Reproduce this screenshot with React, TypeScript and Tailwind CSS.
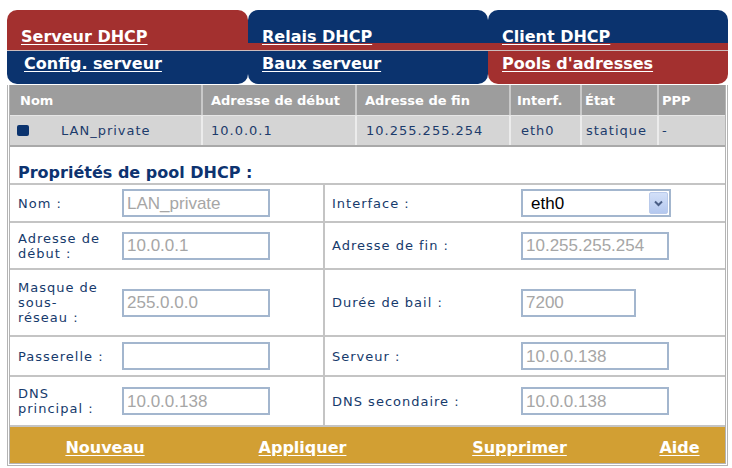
import React from "react";

const RED = "bg-[#a3302f]";
const NAVY = "bg-[#0b336e]";

function Input({ value, w = "w-[148px]" }: { value: string; w?: string }) {
  return (
    <div
      className={`${w} h-[28px] border-2 border-[#a3b6ce] bg-white pl-[3px] flex items-center font-['Liberation_Sans',Arial,sans-serif] text-[17px] leading-none text-[#a6a6a6]`}
    >
      {value}
    </div>
  );
}

function Select() {
  return (
    <div className="w-[150px] h-[28px] border-2 border-[#a3b6ce] bg-white flex items-center justify-between">
      <span className="pl-[8px] font-['Liberation_Sans',Arial,sans-serif] text-[17px] leading-none text-black">eth0</span>
      <div className="mr-[1px] w-[19px] h-[22px] rounded-[2px] border border-[#b9caeb] bg-[linear-gradient(#d3e0f8,#b4c8ef)] flex items-center justify-center">
        <svg width="9" height="7" viewBox="0 0 9 7">
          <path d="M1 1.5 L4.5 5 L8 1.5" fill="none" stroke="#4a5e86" strokeWidth="2" />
        </svg>
      </div>
    </div>
  );
}

function Label({ lines, w, pl }: { lines: string[]; w: string; pl: string }) {
  return (
    <div className={`${w} ${pl} text-[13px] leading-[15px] tracking-[1px] text-[#163a6c]`}>
      {lines.map((l, i) => (
        <div key={i}>{l}</div>
      ))}
    </div>
  );
}

function FormRow({
  h,
  left,
  leftInput,
  right,
  rightInput,
}: {
  h: string;
  left: string[];
  leftInput: React.ReactNode;
  right: string[];
  rightInput: React.ReactNode;
}) {
  return (
    <div className={`flex ${h} border-b-2 border-[#c4c4c4]`}>
      <div className="w-[315px] flex items-center border-r-2 border-[#c4c4c4]">
        <Label lines={left} w="w-[112px]" pl="pl-[8px]" />
        {leftInput}
      </div>
      <div className="flex-1 flex items-center">
        <Label lines={right} w="w-[196px]" pl="pl-[7px]" />
        {rightInput}
      </div>
    </div>
  );
}

export default function App() {
  const tabText = "text-[16px] leading-[19px] font-bold text-white underline underline-offset-[2px] whitespace-nowrap";
  return (
    <div className="w-[732px] h-[468px] bg-white pl-[7px] pt-[10px] font-['DejaVu_Sans',Verdana,sans-serif]">
      <div className="w-[721px]">
        {/* top tabs */}
        <div className="flex h-[33px]">
          <div className={`w-[241px] ${RED} rounded-t-[10px] pl-[14px] pt-[15px]`}>
            <span className={tabText}>Serveur DHCP</span>
          </div>
          <div className={`w-[240px] ${NAVY} rounded-t-[10px] pl-[14px] pt-[15px]`}>
            <span className={tabText}>Relais DHCP</span>
          </div>
          <div className={`w-[240px] ${NAVY} rounded-t-[10px] pl-[14px] pt-[15px]`}>
            <span className={tabText}>Client DHCP</span>
          </div>
        </div>
        <div className={`h-[7px] ${RED}`} />
        <div className="h-px bg-[#cdbcbc]" />
        {/* second tabs */}
        <div className="flex h-[33px]">
          <div className={`w-[241px] ${NAVY} rounded-b-[10px] pl-[17px] pt-[1px]`}>
            <span className={tabText}>Config. serveur</span>
          </div>
          <div className={`w-[240px] ${NAVY} rounded-b-[10px] pl-[14px] pt-[1px]`}>
            <span className={tabText}>Baux serveur</span>
          </div>
          <div className={`w-[240px] ${RED} rounded-b-[10px] pl-[14px] pt-[1px]`}>
            <span className={tabText}>Pools d'adresses</span>
          </div>
        </div>
        {/* frame */}
        <div className="border-x-[3px] border-b-[3px] border-double border-[#b4b4b4] mt-px">
          {/* table header */}
          <div className="flex h-[30px] bg-[#9d9d9d] text-white font-bold text-[13px] leading-[15px]">
            <div className="w-[193px] pl-[10px] flex items-center border-r-2 border-[#c9c9c9]">Nom</div>
            <div className="w-[154px] pl-[8px] flex items-center border-r-2 border-[#c9c9c9]">Adresse de début</div>
            <div className="w-[154px] pl-[8px] flex items-center border-r-2 border-[#c9c9c9]">Adresse de fin</div>
            <div className="w-[71px] pl-[6px] flex items-center border-r-2 border-[#c9c9c9]">Interf.</div>
            <div className="w-[77px] pl-[3px] flex items-center border-r-2 border-[#c9c9c9]">État</div>
            <div className="flex-1 pl-[3px] flex items-center">PPP</div>
          </div>
          {/* data row */}
          <div className="flex h-[32px] bg-[#d5d5d5] text-[#1c3b6b] text-[13px] leading-[15px] tracking-[1px] border-t border-[#e6e6e6] border-b-2 border-b-[#a9a9a9]">
            <div className="w-[193px] pl-[7px] flex items-center border-r-2 border-[#ececec]">
              <div className="w-[12px] h-[11px] rounded-[2px] bg-[#0b336e]" />
              <span className="ml-[32px]">LAN_private</span>
            </div>
            <div className="w-[154px] pl-[8px] flex items-center border-r-2 border-[#ececec]">10.0.0.1</div>
            <div className="w-[154px] pl-[9px] flex items-center border-r-2 border-[#ececec]">10.255.255.254</div>
            <div className="w-[71px] pl-[10px] flex items-center border-r-2 border-[#ececec]">eth0</div>
            <div className="w-[77px] pl-[4px] flex items-center border-r-2 border-[#ececec]">statique</div>
            <div className="flex-1 pl-[3px] flex items-center">-</div>
          </div>
          {/* title */}
          <div className="h-[36px] pl-[8px] pt-[16px] text-[16px] leading-[19px] font-bold text-[#0d3370]">
            Propriétés de pool DHCP :
          </div>
          {/* form */}
          <div className="border-t-2 border-[#c4c4c4]">
            <FormRow h="h-[38px]" left={["Nom :"]} leftInput={<Input value="LAN_private" />} right={["Interface :"]} rightInput={<Select />} />
            <FormRow
              h="h-[47px]"
              left={["Adresse de", "début :"]}
              leftInput={<Input value="10.0.0.1" />}
              right={["Adresse de fin :"]}
              rightInput={<Input value="10.255.255.254" />}
            />
            <FormRow
              h="h-[67px]"
              left={["Masque de", "sous-", "réseau :"]}
              leftInput={<Input value="255.0.0.0" />}
              right={["Durée de bail :"]}
              rightInput={<Input value="7200" w="w-[115px]" />}
            />
            <FormRow h="h-[40px]" left={["Passerelle :"]} leftInput={<Input value="" />} right={["Serveur :"]} rightInput={<Input value="10.0.0.138" />} />
            <FormRow
              h="h-[50px]"
              left={["DNS", "principal :"]}
              leftInput={<Input value="10.0.0.138" />}
              right={["DNS secondaire :"]}
              rightInput={<Input value="10.0.0.138" />}
            />
          </div>
          {/* footer */}
          <div className="flex h-[36px] bg-[#d29f33] pt-[9px]">
            <div className="w-[190px] text-center"><span className={tabText}>Nouveau</span></div>
            <div className="w-[205px] text-center"><span className={tabText}>Appliquer</span></div>
            <div className="w-[229px] text-center"><span className={tabText}>Supprimer</span></div>
            <div className="flex-1 text-center"><span className={tabText}>Aide</span></div>
          </div>
        </div>
      </div>
    </div>
  );
}
